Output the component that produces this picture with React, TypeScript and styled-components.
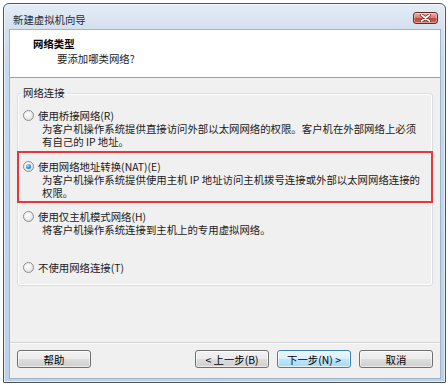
import React from "react";
import styled, { createGlobalStyle } from "styled-components";

const GlobalStyle = createGlobalStyle`
  html, body {
    margin: 0;
    padding: 0;
    background: #ffffff;
  }
  body {
    font-family: "Noto Sans CJK SC", "Noto Sans", sans-serif;
    font-size: 10.4px;
    color: #1a1a1a;
  }
`;

const Window = styled.div`
  box-sizing: border-box;
  width: 443px;
  height: 380px;
  margin: 3px 0 0 3px;
  border: 1px solid #4e545c;
  border-radius: 6px 6px 1px 1px;
  padding: 0 5px 4px 6px;
  display: flex;
  flex-direction: column;
  background: linear-gradient(to bottom, #e4ecf6 0px, #d3e0ee 26px, #c8d9ec 60px, #bcd1e8 100%);
  box-shadow: inset 0 0 0 1px rgba(255, 255, 255, 0.55);
`;

const TitleBar = styled.div`
  height: 26px;
  flex: none;
  display: flex;
  align-items: flex-start;
  padding-left: 3px;
`;

const TitleText = styled.span`
  margin-top: 9px;
  line-height: 13px;
  color: #1e2a36;
  white-space: nowrap;
`;

const CloseButton = styled.div`
  margin-left: auto;
  margin-top: 8px;
  margin-right: 2px;
  width: 25px;
  height: 12px;
  box-sizing: border-box;
  border: 1px solid #6b2a22;
  border-radius: 3px;
  background: linear-gradient(to bottom, #e9b2a8 0%, #d88273 45%, #c3463a 55%, #cf6a5c 100%);
  box-shadow: inset 0 0 0 1px rgba(255, 255, 255, 0.35);
  display: flex;
  align-items: center;
  justify-content: center;
`;

const Client = styled.div`
  flex: 1;
  display: flex;
  flex-direction: column;
  background: #f0f0f0;
  box-shadow: 0 0 0 1px #9fb3c9;
`;

const Header = styled.div`
  height: 48px;
  flex: none;
  box-sizing: border-box;
  background: #ffffff;
  border-bottom: 1px solid #a0a0a0;
  padding: 6px 0 0 23px;
`;

const HeaderTitle = styled.div`
  font-weight: 700;
  line-height: 15px;
  color: #000;
`;

const HeaderSub = styled.div`
  line-height: 15px;
  padding-left: 24px;
  color: #1a1a1a;
`;

const Body = styled.div`
  flex: 1;
  display: flex;
  flex-direction: column;
  padding: 0 7px;
`;

const Group = styled.fieldset`
  margin: 8px 0 0;
  padding: 8.5px 0 11px;
  border: 1px solid #d5dfe5;
  border-radius: 3px;
  box-shadow: inset 0 0 0 1px #ffffff;
  min-width: 0;
`;

const GroupLabel = styled.legend`
  margin-left: 3px;
  padding: 0 2px;
  line-height: 14px;
  color: #1a1a1a;
`;

const Option = styled.div<{ $highlight?: boolean; $gap?: number }>`
  margin-top: ${(p) => p.$gap ?? 0}px;
  ${(p) =>
    p.$highlight
      ? `
    margin-left: -1px;
    margin-right: -1px;
    border: 2px solid #e8373b;
    padding: 7px 0 2px 4px;
  `
      : `
    padding-left: 5px;
  `}
`;

const RadioRow = styled.div`
  display: flex;
  align-items: center;
  gap: 4px;
  line-height: 13px;
  white-space: nowrap;
`;

const RadioCircle = styled.span<{ $checked?: boolean }>`
  flex: none;
  width: 11px;
  height: 11px;
  box-sizing: border-box;
  border-radius: 50%;
  border: 1px solid #8a8c8f;
  background: radial-gradient(circle at 40% 35%, #ffffff 0%, #f0f0f0 45%, #cfd2d6 100%);
  display: flex;
  align-items: center;
  justify-content: center;

  &::after {
    content: "";
    display: ${(p) => (p.$checked ? "block" : "none")};
    width: 5px;
    height: 5px;
    border-radius: 50%;
    background: radial-gradient(circle at 40% 35%, #b4e2ff 0%, #2f86d0 55%, #0d3f7e 100%);
  }
`;

const Desc = styled.div`
  padding-left: 19px;
  line-height: 13px;
  white-space: nowrap;
`;

const Footer = styled.div`
  flex: none;
  display: flex;
  align-items: flex-start;
  gap: 8px;
  height: 36px;
  box-sizing: border-box;
  padding: 7px 7px 0;
  border-top: 1px solid #d4d4d4;
  box-shadow: inset 0 1px 0 #fafafa;
`;

const Button = styled.div<{ $primary?: boolean; $push?: boolean }>`
  width: 74px;
  height: 18px;
  box-sizing: border-box;
  margin-left: ${(p) => (p.$push ? "auto" : "0")};
  border: 1px solid ${(p) => (p.$primary ? "#3c7fb1" : "#707070")};
  border-radius: 3px;
  background: ${(p) =>
    p.$primary
      ? "linear-gradient(to bottom, #eaf6fd 0%, #d9f0fc 50%, #bee6fd 51%, #a7d9f5 100%)"
      : "linear-gradient(to bottom, #f2f2f2 0%, #ebebeb 50%, #dddddd 51%, #cfcfcf 100%)"};
  box-shadow: inset 0 0 0 1px ${(p) => (p.$primary ? "rgba(255,255,255,0.7)" : "rgba(255,255,255,0.6)")};
  display: flex;
  align-items: center;
  justify-content: center;
  line-height: 13px;
  color: #000;
  white-space: nowrap;
`;

type Opt = {
  label: string;
  lines: string[];
  checked?: boolean;
  highlight?: boolean;
  gap: number;
};

const options: Opt[] = [
  {
    label: "使用桥接网络(R)",
    lines: [
      "为客户机操作系统提供直接访问外部以太网网络的权限。客户机在外部网络上必须",
      "有自己的 IP 地址。",
    ],
    gap: 0,
  },
  {
    label: "使用网络地址转换(NAT)(E)",
    lines: [
      "为客户机操作系统提供使用主机 IP 地址访问主机拨号连接或外部以太网网络连接的",
      "权限。",
    ],
    checked: true,
    highlight: true,
    gap: 3,
  },
  {
    label: "使用仅主机模式网络(H)",
    lines: ["将客户机操作系统连接到主机上的专用虚拟网络。"],
    gap: 7,
  },
  {
    label: "不使用网络连接(T)",
    lines: [],
    gap: 25,
  },
];

const CloseGlyph = () => (
  <svg width="11" height="8" viewBox="0 0 11 8">
    <path
      d="M1.5 1 L9.5 7 M9.5 1 L1.5 7"
      stroke="#5a2520"
      strokeWidth="3.2"
      strokeLinecap="round"
    />
    <path
      d="M1.5 1 L9.5 7 M9.5 1 L1.5 7"
      stroke="#ffffff"
      strokeWidth="1.8"
      strokeLinecap="round"
    />
  </svg>
);

const App = () => {
  return (
    <>
      <GlobalStyle />
      <Window>
        <TitleBar>
          <TitleText>新建虚拟机向导</TitleText>
          <CloseButton>
            <CloseGlyph />
          </CloseButton>
        </TitleBar>
        <Client>
          <Header>
            <HeaderTitle>网络类型</HeaderTitle>
            <HeaderSub>要添加哪类网络?</HeaderSub>
          </Header>
          <Body>
            <Group>
              <GroupLabel>网络连接</GroupLabel>
              {options.map((o) => (
                <Option key={o.label} $highlight={o.highlight} $gap={o.gap}>
                  <RadioRow>
                    <RadioCircle $checked={o.checked} />
                    <span>{o.label}</span>
                  </RadioRow>
                  {o.lines.map((l) => (
                    <Desc key={l}>{l}</Desc>
                  ))}
                </Option>
              ))}
            </Group>
          </Body>
          <Footer>
            <Button>帮助</Button>
            <Button $push>&lt; 上一步(B)</Button>
            <Button $primary>下一步(N) &gt;</Button>
            <Button>取消</Button>
          </Footer>
        </Client>
      </Window>
    </>
  );
};

export default App;
